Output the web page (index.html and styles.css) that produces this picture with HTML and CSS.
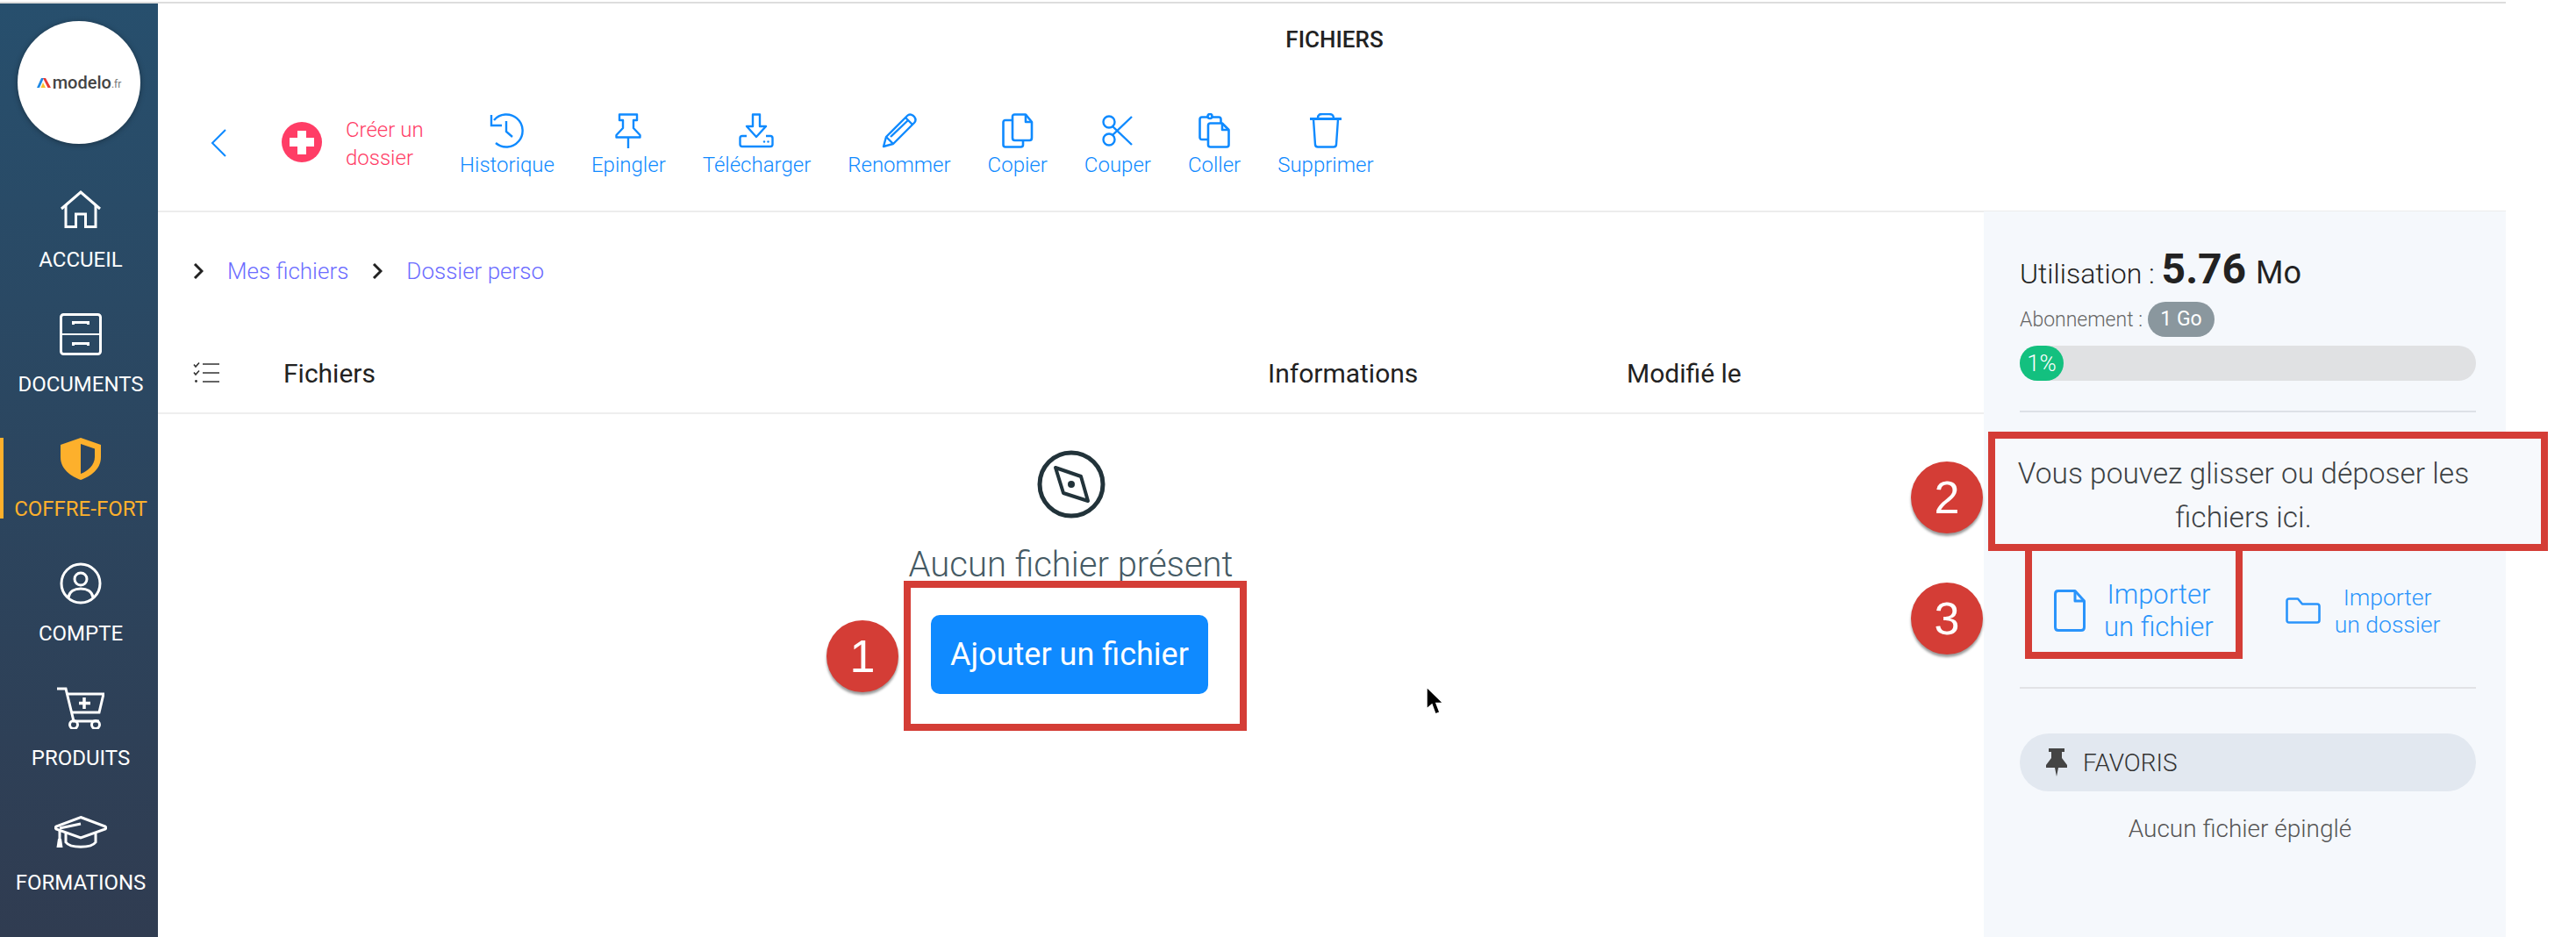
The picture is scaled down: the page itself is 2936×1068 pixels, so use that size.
FILE: index.html
```html
<!DOCTYPE html>
<html lang="fr">
    <head>
        <meta charset="UTF-8" />
        <title>Fichiers</title>
        <link rel="stylesheet" href="styles.css">
    </head>
    <body>
        <div class="page">
            <div class="app">
                <nav class="sidebar">
                    <div class="logo">
                        <svg class="logo-mark" width="16" height="12" viewBox="0 0 16 12">
                            <path d="M0 12 L5 1 H8 L3 12Z" fill="#1e88e5"/>
                            <path d="M7 1 H10 L16 12 H12.5Z" fill="#e53935"/>
                            <path d="M7 6 L10 12 H4.5Z" fill="#fbc02d"/>
                        </svg>
                        <span class="logo-name">modelo</span><span class="logo-tld">.fr</span>
                    </div>

                    <a class="nav-item">
                        <svg width="48" height="44" viewBox="0 0 48 44" fill="none" stroke="#fff" stroke-width="3">
                            <path d="M2 21 L24 2 L46 21"/>
                            <path d="M7 17 V41.5 H18.5 V27 H29.5 V41.5 H41 V17"/>
                        </svg>
                        <span>ACCUEIL</span>
                    </a>
                    <a class="nav-item">
                        <svg width="48" height="48" viewBox="0 0 48 48" fill="none" stroke="#fff" stroke-width="3">
                            <rect x="1.5" y="1.5" width="45" height="45" rx="3"/>
                            <path d="M1.5 24 H46.5" stroke-width="2"/>
                            <path d="M15.5 13 V10.5 H32.5 V13 M15.5 37 V34.5 H32.5 V37"/>
                        </svg>
                        <span>DOCUMENTS</span>
                    </a>
                    <a class="nav-item active">
                        <svg width="46" height="48" viewBox="0 0 46 48">
                            <path d="M23 0 L46 8 V22 C46 36 34 44 23 48 C12 44 0 36 0 22 V8Z" fill="#fdb02c"/>
                            <path d="M23 7 L39 12.5 V22 C39 31 31 38 23 41Z" fill="#2c4560"/>
                        </svg>
                        <span>COFFRE-FORT</span>
                    </a>
                    <a class="nav-item">
                        <svg width="48" height="48" viewBox="0 0 48 48" fill="none" stroke="#fff" stroke-width="3">
                            <circle cx="24" cy="24" r="22"/>
                            <circle cx="24" cy="19" r="7"/>
                            <path d="M10 40 C11 33 17 30 24 30 C31 30 37 33 38 40"/>
                        </svg>
                        <span>COMPTE</span>
                    </a>
                    <a class="nav-item">
                        <svg width="54" height="48" viewBox="0 0 54 48" fill="none" stroke="#fff" stroke-width="3">
                            <path d="M0 2 H10 L19 39 H48"/>
                            <path d="M11 8 H53 L48 29 H16"/>
                            <path d="M31 12 V25 M25 18.5 H38" stroke-width="3.5"/>
                            <circle cx="19" cy="43" r="4.5"/>
                            <circle cx="44" cy="43" r="4.5"/>
                        </svg>
                        <span>PRODUITS</span>
                    </a>
                    <a class="nav-item">
                        <svg width="60" height="38" viewBox="0 0 60 38" fill="none" stroke="#fff" stroke-width="3">
                            <path d="M30 1.5 L58 12 C59 13 59 14 58 15 L30 25 L2 15 C1 14 1 13 2 12Z"/>
                            <path d="M13 20 V30 C18 37 42 37 47 30 V20"/>
                            <path d="M6 16 V26 M6 14 L30 9"/>
                            <path d="M4 26 H8 L9.5 36 H2.5Z" fill="#fff" stroke="none"/>
                        </svg>
                        <span>FORMATIONS</span>
                    </a>
                </nav>

                <main class="main">
                    <header class="header">
                        <h1 class="title">FICHIERS</h1>
                        <div class="toolbar">
                            <svg class="back" width="18" height="32" viewBox="0 0 18 32" fill="none" stroke="#0f8aff" stroke-width="2">
                                <path d="M17 1 L2 16 L17 31"/>
                            </svg>
                            <svg class="add-icon" width="46" height="46" viewBox="0 0 46 46">
                                <circle cx="23" cy="23" r="23" fill="#ff3d66"/>
                                <path d="M18 10 H28 V18 H37 V28 H28 V37 H18 V28 H9 V18 H18Z" fill="#fff"/>
                            </svg>
                            <div class="add-label">Créer un<br>dossier</div>

                            <a class="tool">
                                <svg width="40" height="40" viewBox="0 0 40 40" fill="none" stroke="#0f8aff" stroke-width="2.4">
                                    <path d="M7 34 A18.5 18.5 0 1 0 5 8"/>
                                    <path d="M2 2 V14 H14"/>
                                    <path d="M19 9 V21 L26 27"/>
                                </svg>
                                <span>Historique</span>
                            </a>
                            <a class="tool">
                                <svg width="30" height="40" viewBox="0 0 30 40" fill="none" stroke="#0f8aff" stroke-width="2.4" stroke-linejoin="round">
                                    <path d="M5 1.5 H25 V8 H21 V17 L28.5 25 V27.5 H1.5 V25 L9 17 V8 H5Z"/>
                                    <path d="M15 27.5 V40"/>
                                </svg>
                                <span>Epingler</span>
                            </a>
                            <a class="tool">
                                <svg width="40" height="40" viewBox="0 0 40 40" fill="none" stroke="#0f8aff" stroke-width="2.4" stroke-linejoin="round">
                                    <path d="M16 1.5 H24 V15 H31 L20 27 L9 15 H16Z"/>
                                    <path d="M9 26 H4 Q1.5 26 1.5 28.5 V35.5 Q1.5 38 4 38 H36 Q38.5 38 38.5 35.5 V28.5 Q38.5 26 36 26 H31"/>
                                    <circle cx="29" cy="32.5" r="1.2" fill="#0f8aff" stroke="none"/>
                                    <circle cx="33.5" cy="32.5" r="1.2" fill="#0f8aff" stroke="none"/>
                                </svg>
                                <span>Télécharger</span>
                            </a>
                            <a class="tool">
                                <svg width="40" height="40" viewBox="0 0 40 40" fill="none" stroke="#0f8aff" stroke-width="2.4" stroke-linejoin="round">
                                    <path d="M2 38 L5 27 L29 3 Q32 0 36 3 L37 4 Q40 8 37 11 L13 35Z"/>
                                    <path d="M27 5 L35 13 M5 27 L13 35 M10 27 L30 8"/>
                                </svg>
                                <span>Renommer</span>
                            </a>
                            <a class="tool">
                                <svg width="36" height="40" viewBox="0 0 36 40" fill="none" stroke="#0f8aff" stroke-width="2.6" stroke-linejoin="round">
                                    <path d="M12 4 Q12 1.5 14.5 1.5 H27 L34 10 V28 Q34 31 31.5 31 H14.5 Q12 31 12 28Z"/>
                                    <path d="M27 1.5 V10 H34"/>
                                    <path d="M12 8 H4 Q1.5 8 1.5 10.5 V36 Q1.5 38.5 4 38.5 H21.5 Q24 38.5 24 36 V31"/>
                                </svg>
                                <span>Copier</span>
                            </a>
                            <a class="tool">
                                <svg width="36" height="40" viewBox="0 0 36 40" fill="none" stroke="#0f8aff" stroke-width="2.4">
                                    <circle cx="8" cy="10" r="6.5"/>
                                    <circle cx="8" cy="30" r="6.5"/>
                                    <path d="M12 15 L34 36 M12 25 L34 4"/>
                                </svg>
                                <span>Couper</span>
                            </a>
                            <a class="tool">
                                <svg width="36" height="40" viewBox="0 0 36 40" fill="none" stroke="#0f8aff" stroke-width="2.6" stroke-linejoin="round">
                                    <path d="M10 30 H4 Q1.5 30 1.5 27.5 V7 Q1.5 4.5 4 4.5 H23 Q25.5 4.5 25.5 7 V12"/>
                                    <circle cx="13" cy="3.5" r="2.5" fill="#fff"/>
                                    <path d="M11 14 Q11 11.5 13.5 11.5 H27 L34.5 19 V36 Q34.5 38.5 32 38.5 H13.5 Q11 38.5 11 36Z"/>
                                    <path d="M27 11.5 V19 H34.5"/>
                                </svg>
                                <span>Coller</span>
                            </a>
                            <a class="tool">
                                <svg width="36" height="40" viewBox="0 0 36 40" fill="none" stroke="#0f8aff" stroke-width="2.4" stroke-linejoin="round">
                                    <path d="M0 6.5 H36" stroke-width="3"/>
                                    <path d="M9 6 C9 1 12 1 14 1 H22 C24 1 27 1 27 6"/>
                                    <path d="M4 7 L6 36 Q6.3 38.5 9 38.5 H27 Q29.7 38.5 30 36 L32 7"/>
                                </svg>
                                <span>Supprimer</span>
                            </a>
                        </div>
                    </header>

                    <div class="content">
                        <section class="files">
                            <div class="breadcrumb">
                                <svg width="12" height="18" viewBox="0 0 12 18" fill="none" stroke="#222" stroke-width="3"><path d="M2 1 L10 9 L2 17"/></svg>
                                <a>Mes fichiers</a>
                                <svg width="12" height="18" viewBox="0 0 12 18" fill="none" stroke="#222" stroke-width="3"><path d="M2 1 L10 9 L2 17"/></svg>
                                <a>Dossier perso</a>
                            </div>
                            <div class="table-head">
                                <svg width="30" height="24" viewBox="0 0 30 24" fill="none" stroke="#333" stroke-width="1.6">
                                    <path d="M1 2.5 L3 5 L7 0.5 M1 11.5 L3 14 L7 9.5"/>
                                    <path d="M11 2 H30 M11 12 H30 M11 22 H30"/>
                                    <circle cx="3.5" cy="21.5" r="1.4" fill="#333" stroke="none"/>
                                </svg>
                                <span>Fichiers</span>
                                <span>Informations</span>
                                <span>Modifié le</span>
                            </div>
                            <div class="empty">
                                <svg width="78" height="78" viewBox="0 0 78 78" fill="none" stroke="#22333a" stroke-width="5" stroke-linejoin="round">
                                    <circle cx="39" cy="39" r="36"/>
                                    <path d="M21 20 L50 30 L58 58 L30 49Z" stroke-width="4"/>
                                    <circle cx="39" cy="39" r="4" fill="#22333a" stroke="none"/>
                                </svg>
                                <p class="empty-text">Aucun fichier présent</p>
                                <button class="add-file">Ajouter un fichier</button>
                            </div>
                        </section>

                        <aside class="rail">
                            <div class="usage">Utilisation : <strong>5.76</strong> <span>Mo</span></div>
                            <div class="plan">Abonnement : <span class="plan-badge">1 Go</span></div>
                            <div class="progress"><div class="progress-fill">1%</div></div>
                            <hr class="rule">
                            <p class="drop-note">Vous pouvez glisser ou déposer les<br>fichiers ici.</p>
                            <div class="imports">
                                <a class="import import-file">
                                    <svg width="36" height="48" viewBox="0 0 36 48" fill="none" stroke="#2a94fb" stroke-width="3" stroke-linejoin="round">
                                        <path d="M1.5 5 Q1.5 1.5 5 1.5 H24 L34.5 13 V43 Q34.5 46.5 31 46.5 H5 Q1.5 46.5 1.5 43Z"/>
                                        <path d="M24 1.5 V13 H34.5"/>
                                    </svg>
                                    <span>Importer<br>un fichier</span>
                                </a>
                                <a class="import import-folder">
                                    <svg width="40" height="30" viewBox="0 0 40 30" fill="none" stroke="#2a94fb" stroke-width="2.6" stroke-linejoin="round">
                                        <path d="M1.5 4 Q1.5 1.5 4 1.5 H14 L19 7.5 H36 Q38.5 7.5 38.5 10 V26 Q38.5 28.5 36 28.5 H4 Q1.5 28.5 1.5 26Z"/>
                                    </svg>
                                    <span>Importer<br>un dossier</span>
                                </a>
                            </div>
                            <hr class="rule rule-light">
                            <div class="favorites">
                                <svg width="24" height="32" viewBox="0 0 24 32">
                                    <path d="M3 0 H21 V4 H18 V11 L24 19 V22 H14 L12 32 L10 22 H0 V19 L6 11 V4 H3Z" fill="#444"/>
                                </svg>
                                <span>FAVORIS</span>
                            </div>
                            <p class="no-pins">Aucun fichier épinglé</p>
                        </aside>
                    </div>
                </main>
            </div>

            <!-- annotations drawn over the screenshot -->
            <div class="callout callout-add"></div>
            <div class="callout callout-drop"></div>
            <div class="callout callout-import"></div>
            <div class="step step-1">1</div>
            <div class="step step-2">2</div>
            <div class="step step-3">3</div>
            <svg class="cursor" width="22" height="34" viewBox="0 0 22 34">
                <path d="M2 1 V26 L8 21 L12 32 L17 30 L13 19.5 L21 19.5Z" fill="#000" stroke="#fff" stroke-width="1.5"/>
            </svg>
        </div>
    </body>
</html>
```

FILE: styles.css
```css
* {
    margin: 0;
    padding: 0;
    box-sizing: border-box;
}

body {
    background-color: #fff;
    font-family: Roboto, sans-serif;
    overflow: hidden;
}

.page {
    position: relative;
    width: 2936px;
    height: 1068px;
    padding-top: 2px;
}

.app {
    display: flex;
    width: 2856px;
    height: 1066px;
    border-top: 2px solid #ddd;
}

/* sidebar */
.sidebar {
    width: 180px;
    flex-shrink: 0;
    display: flex;
    flex-direction: column;
    align-items: center;
    background: linear-gradient(to bottom, #274f6d, #303c51);
    padding-top: 20px;
}

.logo {
    width: 140px;
    height: 140px;
    border-radius: 50%;
    background-color: #fff;
    box-shadow: 0px 1px 6px rgba(0,0,0,0.35);
    display: flex;
    align-items: center;
    justify-content: center;
    margin-bottom: 51px;
}

.logo-mark {
    margin-right: 2px;
}

.logo-name {
    font-size: 20px;
    font-weight: 500;
    color: #444;
}

.logo-tld {
    font-size: 12px;
    color: #777;
    align-self: center;
    margin-top: 4px;
}

.nav-item {
    position: relative;
    width: 100%;
    height: 142px;
    padding-left: 4px;
    display: flex;
    flex-direction: column;
    align-items: center;
    color: #fff;
    font-size: 24px;
}

.nav-item svg {
    height: 48px;
    flex-shrink: 0;
}

.nav-item span {
    position: absolute;
    top: 66px;
    line-height: 30px;
}

.nav-item.active {
    color: #fdb02c;
}

.nav-item.active::before {
    content: "";
    position: absolute;
    left: 0;
    top: 0;
    width: 4px;
    height: 92px;
    background-color: #fdb02c;
}

/* header */
.main {
    flex: 1;
    display: flex;
    flex-direction: column;
    min-width: 0;
}

.header {
    height: 238px;
    border-bottom: 2px solid #ececec;
    padding-top: 26px;
}

.title {
    font-size: 26px;
    font-weight: 500;
    line-height: 30px;
    color: #222;
    text-align: center;
    padding-left: 6px;
}

.toolbar {
    display: flex;
    align-items: flex-start;
    gap: 42px;
    padding-left: 60px;
    margin-top: 69px;
}

.back {
    margin-top: 18px;
    margin-right: 21px;
}

.add-icon {
    margin-top: 10px;
    margin-right: -15px;
}

.add-label {
    font-size: 24px;
    font-weight: 300;
    line-height: 32px;
    color: #ff3d66;
    margin-top: 3px;
    margin-right: 1px;
    width: 87px;
    white-space: nowrap;
}

.tool {
    display: flex;
    flex-direction: column;
    align-items: center;
    gap: 4px;
    color: #0f8aff;
    font-size: 24px;
    font-weight: 300;
    line-height: 30px;
}

/* file list */
.content {
    flex: 1;
    display: flex;
    min-height: 0;
}

.files {
    flex: 1;
    min-width: 0;
}

.breadcrumb {
    display: flex;
    align-items: center;
    height: 40px;
    margin-top: 47px;
    padding-left: 40px;
    font-size: 26px;
    font-weight: 300;
    color: #6c6cff;
}

.breadcrumb a {
    margin-left: 27px;
    margin-right: 27px;
}

.table-head {
    display: grid;
    grid-template-columns: 103px 1122px 409px 1fr;
    align-items: center;
    height: 96px;
    margin-top: 47px;
    padding-left: 40px;
    padding-top: 18px;
    padding-bottom: 14px;
    border-bottom: 2px solid #eee;
    font-size: 30px;
    color: #222;
}

.empty {
    display: flex;
    flex-direction: column;
    align-items: center;
    padding-top: 41px;
}

.empty-text {
    font-size: 40px;
    font-weight: 300;
    line-height: 50px;
    color: #455a64;
    margin-top: 28px;
}

.add-file {
    width: 316px;
    height: 90px;
    margin-top: 32px;
    margin-right: 3px;
    border: none;
    border-radius: 10px;
    background-color: #0f8aff;
    color: #fff;
    font-family: Roboto, sans-serif;
    font-size: 36px;
    font-weight: 400;
}

/* right rail */
.rail {
    width: 595px;
    flex-shrink: 0;
    background-color: #f5f8fc;
    padding: 41px 34px 0 41px;
    margin-top: -1px;
}

.usage {
    height: 55px;
    font-size: 32px;
    font-weight: 300;
    line-height: 50px;
    color: #222;
    white-space: nowrap;
}

.usage strong {
    font-size: 48px;
    font-weight: 700;
}

.usage span {
    font-size: 36px;
    font-weight: 400;
    margin-left: 3px;
}

.plan {
    display: flex;
    align-items: center;
    gap: 6px;
    height: 40px;
    margin-top: 7px;
    font-size: 23px;
    font-weight: 300;
    color: #666;
}

.plan-badge {
    width: 76px;
    height: 40px;
    border-radius: 20px;
    background-color: #8a979e;
    color: #fff;
    font-weight: 400;
    line-height: 40px;
    text-align: center;
}

.progress {
    height: 40px;
    margin-top: 10px;
    border-radius: 20px;
    background-color: #e0e1e3;
}

.progress-fill {
    width: 50px;
    height: 40px;
    border-radius: 20px;
    background-color: #13c07f;
    color: #fff;
    font-size: 26px;
    font-weight: 300;
    line-height: 40px;
    text-align: center;
}

.rule {
    border: none;
    height: 2px;
    background-color: #dde1e7;
    margin-top: 34px;
}

.rule-light {
    background-color: #e2e3e6;
    margin-top: 19px;
}

.drop-note {
    position: relative;
    z-index: 2;
    height: 158px;
    margin: 0 -4px 0 -14px;
    padding-top: 45px;
    font-size: 33.5px;
    font-weight: 300;
    line-height: 50px;
    color: #3c4144;
    text-align: center;
    white-space: nowrap;
}

.imports {
    display: flex;
    align-items: center;
    height: 136px;
}

.import {
    display: flex;
    align-items: center;
    color: #2a94fb;
    text-align: center;
    white-space: nowrap;
}

.import-file {
    margin-left: 39px;
    gap: 21px;
    font-size: 31px;
    font-weight: 300;
    line-height: 37px;
}

.import-folder {
    margin-left: 82px;
    gap: 16px;
    font-size: 26.5px;
    font-weight: 300;
    line-height: 31px;
}

.favorites {
    display: flex;
    align-items: center;
    gap: 18px;
    height: 66px;
    margin-top: 51px;
    padding-left: 30px;
    border-radius: 33px;
    background-color: #e2e8f0;
    font-size: 28px;
    font-weight: 300;
    color: #333;
}

.no-pins {
    margin-top: 28px;
    padding-right: 18px;
    font-size: 28px;
    font-weight: 300;
    line-height: 30px;
    color: #555;
    text-align: center;
}

/* annotations */
.callout {
    position: absolute;
    border: 8px solid #d43d36;
}

.callout-add {
    left: 1030px;
    top: 662px;
    width: 391px;
    height: 171px;
}

.callout-drop {
    left: 2266px;
    top: 492px;
    width: 638px;
    height: 136px;
    z-index: 1;
    background-color: #f7f9fc;
}

.callout-import {
    left: 2308px;
    top: 620px;
    width: 248px;
    height: 131px;
}

.step {
    position: absolute;
    width: 82px;
    height: 82px;
    border-radius: 50%;
    background-color: #d43d36;
    box-shadow: 0px 3px 3px rgba(0,0,0,0.4);
    color: #fff;
    font-family: "Liberation Sans", sans-serif;
    font-size: 52px;
    line-height: 82px;
    text-align: center;
}

.step-1 {
    left: 942px;
    top: 707px;
}

.step-2 {
    left: 2178px;
    top: 526px;
}

.step-3 {
    left: 2178px;
    top: 664px;
}

.cursor {
    position: absolute;
    left: 1624px;
    top: 782px;
}
```
